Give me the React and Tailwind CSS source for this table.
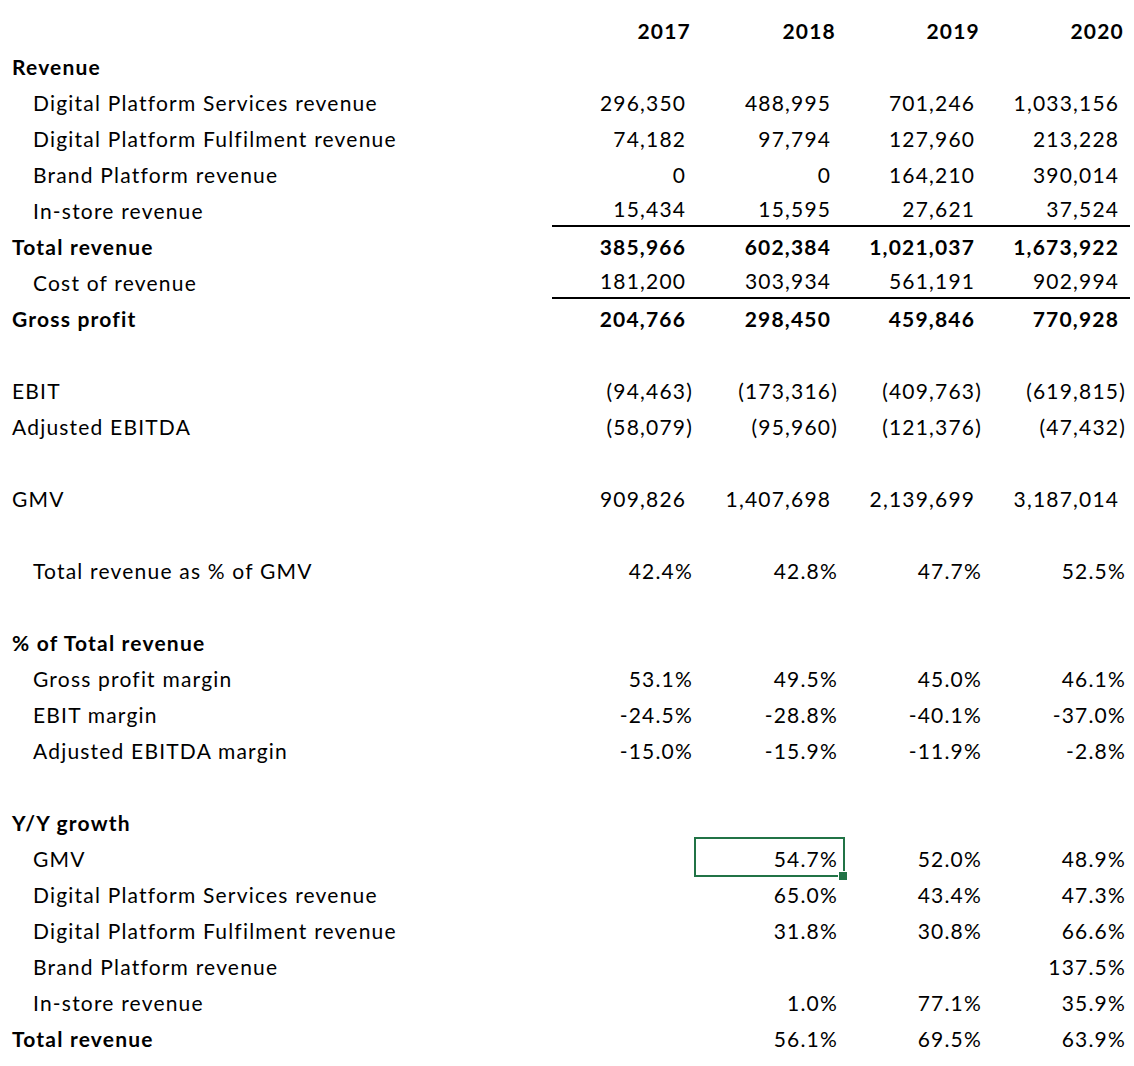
import React from "react";

const years = ["2017", "2018", "2019", "2020"];

// row kinds: section = bold label only, item = indented, plain = not indented,
// total = bold label + bold values, blank = empty spacer
const rows = [
  { kind: "section", label: "Revenue" },
  { kind: "item", label: "Digital Platform Services revenue", vals: ["296,350", "488,995", "701,246", "1,033,156"] },
  { kind: "item", label: "Digital Platform Fulfilment revenue", vals: ["74,182", "97,794", "127,960", "213,228"] },
  { kind: "item", label: "Brand Platform revenue", vals: ["0", "0", "164,210", "390,014"] },
  { kind: "item", label: "In-store revenue", vals: ["15,434", "15,595", "27,621", "37,524"], rule: true },
  { kind: "total", label: "Total revenue", vals: ["385,966", "602,384", "1,021,037", "1,673,922"] },
  { kind: "item", label: "Cost of revenue", vals: ["181,200", "303,934", "561,191", "902,994"], rule: true },
  { kind: "total", label: "Gross profit", vals: ["204,766", "298,450", "459,846", "770,928"] },
  { kind: "blank" },
  { kind: "plain", label: "EBIT", vals: ["(94,463)", "(173,316)", "(409,763)", "(619,815)"] },
  { kind: "plain", label: "Adjusted EBITDA", vals: ["(58,079)", "(95,960)", "(121,376)", "(47,432)"] },
  { kind: "blank" },
  { kind: "plain", label: "GMV", vals: ["909,826", "1,407,698", "2,139,699", "3,187,014"] },
  { kind: "blank" },
  { kind: "item", label: "Total revenue as % of GMV", vals: ["42.4%", "42.8%", "47.7%", "52.5%"] },
  { kind: "blank" },
  { kind: "section", label: "% of Total revenue" },
  { kind: "item", label: "Gross profit margin", vals: ["53.1%", "49.5%", "45.0%", "46.1%"] },
  { kind: "item", label: "EBIT margin", vals: ["-24.5%", "-28.8%", "-40.1%", "-37.0%"] },
  { kind: "item", label: "Adjusted EBITDA margin", vals: ["-15.0%", "-15.9%", "-11.9%", "-2.8%"] },
  { kind: "blank" },
  { kind: "section", label: "Y/Y growth" },
  { kind: "item", label: "GMV", vals: ["", "54.7%", "52.0%", "48.9%"], selected: 1 },
  { kind: "item", label: "Digital Platform Services revenue", vals: ["", "65.0%", "43.4%", "47.3%"] },
  { kind: "item", label: "Digital Platform Fulfilment revenue", vals: ["", "31.8%", "30.8%", "66.6%"] },
  { kind: "item", label: "Brand Platform revenue", vals: ["", "", "", "137.5%"] },
  { kind: "item", label: "In-store revenue", vals: ["", "1.0%", "77.1%", "35.9%"] },
  { kind: "section", label: "Total revenue", vals: ["", "56.1%", "69.5%", "63.9%"] },
];

const colW = ["w-[145px]", "w-[145px]", "w-[144px]", "w-[144px]"];

function Value({ v }) {
  if (!v) return null;
  // accounting format: positive figures keep room for a closing paren
  const pad = !v.endsWith("%") && !v.endsWith(")");
  return (
    <span>
      {v}
      {pad && <span className="invisible">)</span>}
    </span>
  );
}

function Row({ row }) {
  if (row.kind === "blank") return <div className="h-9" />;
  const boldLabel = row.kind === "section" || row.kind === "total";
  const indent = row.kind === "item";
  return (
    <div className="flex h-9">
      <div className={`w-[552px] flex items-end pb-[6px] ${indent ? "pl-[33px]" : "pl-[12px]"} ${boldLabel ? "font-bold" : ""}`}>
        {row.label}
      </div>
      {colW.map((w, i) => (
        <div
          key={i}
          className={`${w} relative flex items-end justify-end pb-[6px] pr-[4px] ${row.kind === "total" ? "font-bold" : ""} ${row.rule ? "border-b-2 border-black" : ""}`}
        >
          {row.vals && <Value v={row.vals[i]} />}
          {row.selected === i && (
            <>
              <div className="absolute -left-[3px] -right-[3px] -top-[2px] -bottom-[2px] border-2 border-[#217346]" />
              <div className="absolute right-[-6px] bottom-[-6px] w-[10px] h-[10px] bg-[#217346] border border-white" />
            </>
          )}
        </div>
      ))}
    </div>
  );
}

export default function App() {
  return (
    <div className="w-[1134px] h-[1066px] bg-white text-black pt-[11px] text-[21px] leading-none tracking-[1.2px] font-['Lato',sans-serif]">
      <div className="flex h-9 font-bold">
        <div className="w-[552px]" />
        {years.map((y, i) => (
          <div key={y} className={`${colW[i]} flex items-end justify-end pb-[6px] pr-[6px]`}>
            {y}
          </div>
        ))}
      </div>
      {rows.map((r, i) => (
        <Row key={i} row={r} />
      ))}
    </div>
  );
}
